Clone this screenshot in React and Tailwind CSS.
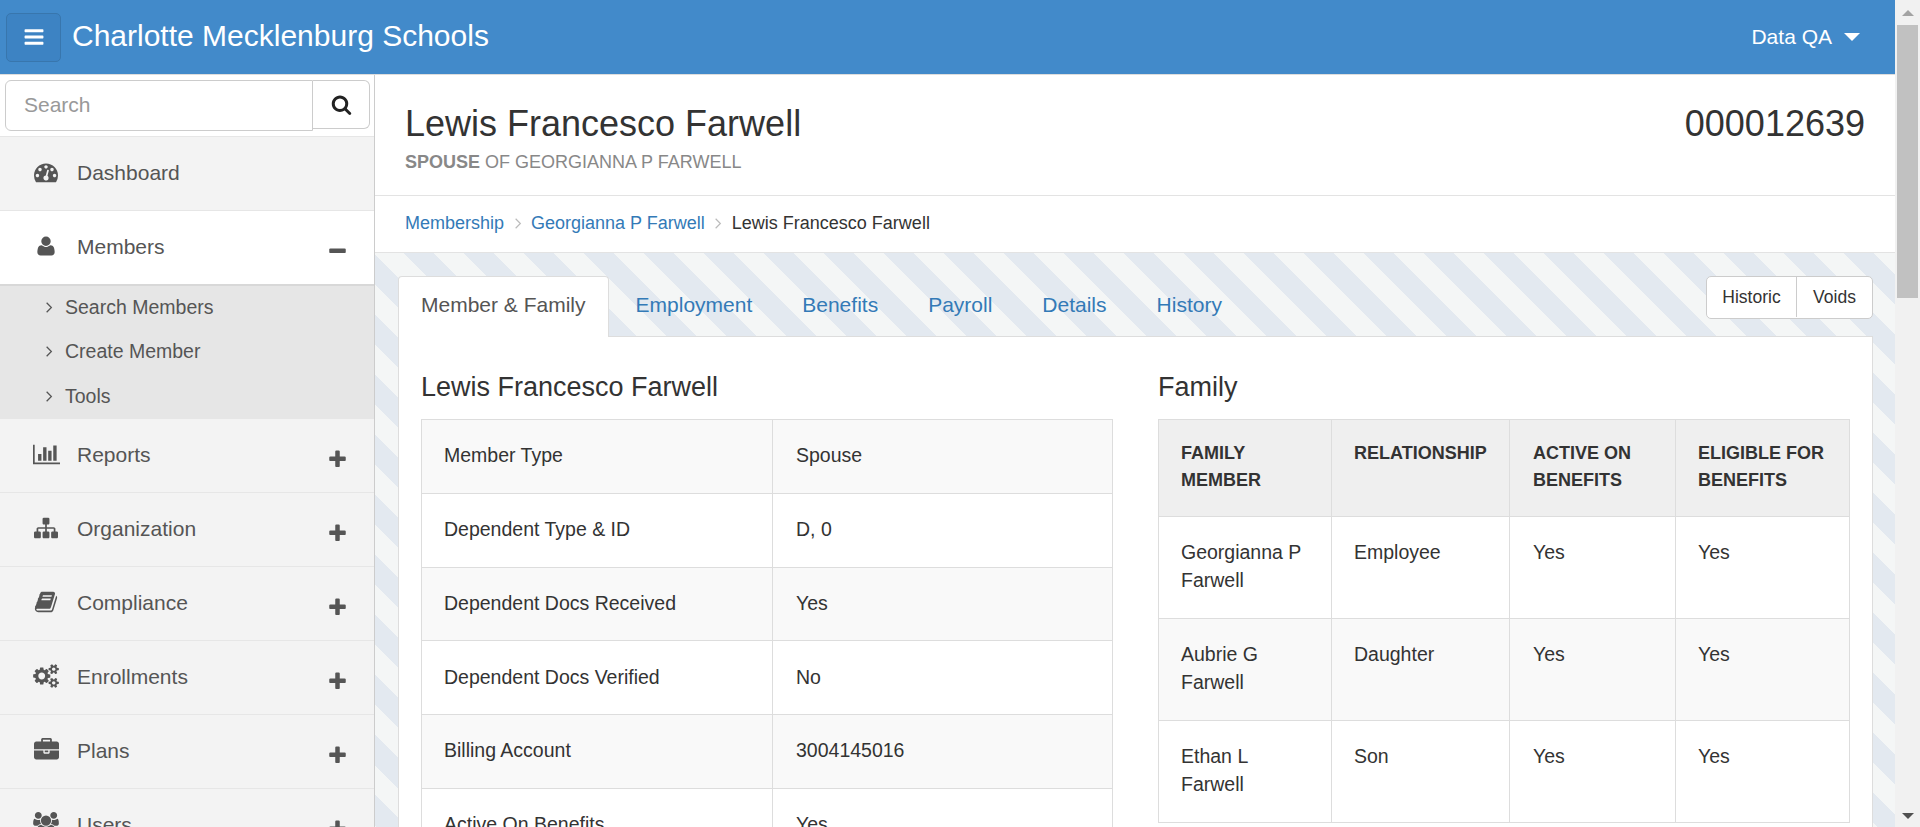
import React from "react";

const paths = {
  bars: "M1664 1344v128q0 26-19 45t-45 19h-1408q-26 0-45-19t-19-45v-128q0-26 19-45t45-19h1408q26 0 45 19t19 45zm0-512v128q0 26-19 45t-45 19h-1408q-26 0-45-19t-19-45v-128q0-26 19-45t45-19h1408q26 0 45 19t19 45zm0-512v128q0 26-19 45t-45 19h-1408q-26 0-45-19t-19-45v-128q0-26 19-45t45-19h1408q26 0 45 19t19 45z",
  search: "M1216 832q0-185-131.5-316.5t-316.5-131.5-316.5 131.5-131.5 316.5 131.5 316.5 316.5 131.5 316.5-131.5 131.5-316.5zm512 832q0 52-38 90t-90 38q-54 0-90-38l-343-342q-179 124-399 124-143 0-273.5-55.5t-225-150-150-225-55.5-273.5 55.5-273.5 150-225 225-150 273.5-55.5 273.5 55.5 225 150 150 225 55.5 273.5q0 220-124 399l343 343q37 37 37 90z",
  dashboard: "M384 1152q0-53-37.5-90.5t-90.5-37.5-90.5 37.5-37.5 90.5 37.5 90.5 90.5 37.5 90.5-37.5 37.5-90.5zm192-448q0-53-37.5-90.5t-90.5-37.5-90.5 37.5-37.5 90.5 37.5 90.5 90.5 37.5 90.5-37.5 37.5-90.5zm428 481l101-382q6-26-7.5-48.5t-38.5-29.5-48 6.5-30 39.5l-101 382q-60 5-107 43.5t-63 98.5q-20 77 20 146t117 89 146-20 89-117q16-60-6-117t-72-91zm660-33q0-53-37.5-90.5t-90.5-37.5-90.5 37.5-37.5 90.5 37.5 90.5 90.5 37.5 90.5-37.5 37.5-90.5zm-640-640q0-53-37.5-90.5t-90.5-37.5-90.5 37.5-37.5 90.5 37.5 90.5 90.5 37.5 90.5-37.5 37.5-90.5zm448 192q0-53-37.5-90.5t-90.5-37.5-90.5 37.5-37.5 90.5 37.5 90.5 90.5 37.5 90.5-37.5 37.5-90.5zm320 448q0 261-141 483-19 29-54 29h-1402q-35 0-54-29-141-221-141-483 0-182 71-348t191-286 286-191 348-71 348 71 286 191 191 286 71 348z",
  user: "M1600 1405q0 120-73 189.5t-194 69.5h-874q-121 0-194-69.5t-73-189.5q0-53 3.5-103.5t14-109 26.5-108.5 43-97.5 62-81 85.5-53.5 111.5-20q9 0 42 21.5t74.5 48 108 48 133.5 21.5 133.5-21.5 108-48 74.5-48 42-21.5q61 0 111.5 20t85.5 53.5 62 81 43 97.5 26.5 108.5 14 109 3.5 103.5zm-320-893q0 159-112.5 271.5t-271.5 112.5-271.5-112.5-112.5-271.5 112.5-271.5 271.5-112.5 271.5 112.5 112.5 271.5z",
  sitemap: "M1792 1248v320q0 40-28 68t-68 28h-320q-40 0-68-28t-28-68v-320q0-40 28-68t68-28h96v-192h-512v192h96q40 0 68 28t28 68v320q0 40-28 68t-68 28h-320q-40 0-68-28t-28-68v-320q0-40 28-68t68-28h96v-192h-512v192h96q40 0 68 28t28 68v320q0 40-28 68t-68 28h-320q-40 0-68-28t-28-68v-320q0-40 28-68t68-28h96v-192q0-52 38-90t90-38h512v-192h-96q-40 0-68-28t-28-68v-320q0-40 28-68t68-28h320q40 0 68 28t28 68v320q0 40-28 68t-68 28h-96v192h512q52 0 90 38t38 90v192h96q40 0 68 28t28 68z",
  book: "M1703 478q40 57 18 129l-275 906q-19 64-76.5 107.5t-122.5 43.5h-923q-77 0-148.5-53.5t-99.5-131.5q-24-67-2-127 0-4 3-27t4-37q1-8-3-21.5t-3-19.5q2-11 8-21t16.5-23.5 16.5-23.5q23-38 45-91.5t30-91.5q3-10 .5-30t-.5-28q3-11 17-28t17-23q21-36 42-92t25-90q1-9-2.5-32t.5-28q4-13 22-30.5t22-22.5q19-26 42.5-84.5t27.5-96.5q1-8-3-25.5t-2-26.5q2-8 9-18t18-23 17-21q8-12 16.5-30.5t15-35 16-36 19.5-32 26.5-23.5 36-11.5 47.5 5.5l-1 3q38-9 51-9h761q74 0 114 56t18 130l-274 906q-36 119-71.5 153.5t-128.5 34.5h-869q-27 0-38 15-11 16-1 43 24 70 144 70h923q29 0 56-15.5t35-41.5l300-987q7-22 5-57 38 15 59 43zm-1064 2q-4 13 2 22.5t20 9.5h608q13 0 25.5-9.5t16.5-22.5l21-64q4-13-2-22.5t-20-9.5h-608q-13 0-25.5 9.5t-16.5 22.5zm-83 256q-4 13 2 22.5t20 9.5h608q13 0 25.5-9.5t16.5-22.5l21-64q4-13-2-22.5t-20-9.5h-608q-13 0-25.5 9.5t-16.5 22.5z",
  briefcase: "M640 256h512v-128h-512v128zm1152 640v480q0 66-47 113t-113 47h-1472q-66 0-113-47t-47-113v-480h672v160q0 26 19 45t45 19h320q26 0 45-19t19-45v-160h672zm-768 0v128h-256v-128h256zm768-480v384h-1792v-384q0-66 47-113t113-47h352v-160q0-40 28-68t68-28h576q40 0 68 28t28 68v160h352q66 0 113 47t47 113z",
  plus: "M1600 736v192q0 40-28 68t-68 28h-416v416q0 40-28 68t-68 28h-192q-40 0-68-28t-28-68v-416h-416q-40 0-68-28t-28-68v-192q0-40 28-68t68-28h416v-416q0-40 28-68t68-28h192q40 0 68 28t28 68v416h416q40 0 68 28t28 68z",
  minus: "M1600 736v192q0 40-28 68t-68 28h-1216q-40 0-68-28t-28-68v-192q0-40 28-68t68-28h1216q40 0 68 28t28 68z",
};

const wide = {
  chart: { box: "0 0 2048 1792", d: "M640 896v512h-256v-512h256zm384-512v1024h-256v-1024h256zm1024 1152v128h-2048v-1472h128v1344h1920zm-640-896v768h-256v-768h256zm384-384v1152h-256v-1152h256z" },
  cogs: { box: "0 0 1920 1792", d: "M896 896q0-106-75-181t-181-75-181 75-75 181 75 181 181 75 181-75 75-181zm768 512q0-52-38-90t-90-38-90 38-38 90q0 53 37.5 90.5t90.5 37.5 90.5-37.5 37.5-90.5zm0-1024q0-52-38-90t-90-38-90 38-38 90q0 53 37.5 90.5t90.5 37.5 90.5-37.5 37.5-90.5zm-384 421v185q0 10-7 19.5t-16 10.5l-155 24q-11 35-32 76 34 48 90 115 7 11 7 20 0 12-7 19-23 30-82.5 89.5t-78.5 59.5q-11 0-21-7l-115-90q-37 19-77 31-11 108-23 155-7 24-30 24h-186q-11 0-20-7.5t-10-17.5l-23-153q-34-10-75-31l-118 89q-7 7-20 7-11 0-21-8-144-133-144-160 0-9 7-19 10-14 41-53t47-61q-23-44-35-82l-152-24q-10-1-17-9.5t-7-19.5v-185q0-10 7-19.5t16-10.5l155-24q11-35 32-76-34-48-90-115-7-11-7-20 0-12 7-20 22-30 82-89t79-59q11 0 21 7l115 90q34-18 77-32 11-108 23-154 7-24 30-24h186q11 0 20 7.5t10 17.5l23 153q34 10 75 31l118-89q8-7 20-7 11 0 21 8 144 133 144 160 0 8-7 19-12 16-42 54t-45 60q23 48 34 82l152 23q10 2 17 10.5t7 19.5zm640 533v140q0 16-149 31-12 27-30 52 51 113 51 138 0 4-4 7-122 71-124 71-8 0-46-47t-52-68q-20 2-30 2t-30-2q-14 21-52 68t-46 47q-2 0-124-71-4-3-4-7 0-25 51-138-18-25-30-52-149-15-149-31v-140q0-16 149-31 13-29 30-52-51-113-51-138 0-4 4-7 4-2 35-20t59-34 30-16q8 0 46 46.5t52 67.5q20-2 30-2t30 2q51-71 92-112l6-2q4 0 124 70 4 3 4 7 0 25-51 138 17 23 30 52 149 15 149 31zm0-1024v140q0 16-149 31-12 27-30 52 51 113 51 138 0 4-4 7-122 71-124 71-8 0-46-47t-52-68q-20 2-30 2t-30-2q-14 21-52 68t-46 47q-2 0-124-71-4-3-4-7 0-25 51-138-18-25-30-52-149-15-149-31v-140q0-16 149-31 13-29 30-52-51-113-51-138 0-4 4-7 4-2 35-20t59-34 30-16q8 0 46 46.5t52 67.5q20-2 30-2t30 2q51-71 92-112l6-2q4 0 124 70 4 3 4 7 0 25-51 138 17 23 30 52 149 15 149 31z" },
  users: { box: "0 0 1920 1792", d: "M593 896q-162 5-265 128h-134q-82 0-138-40.5t-56-118.5q0-353 124-353 6 0 43.5 21t97.5 42.5 119 21.5q67 0 133-23-5 37-5 66 0 139 81 256zm1071 637q0 120-73 189.5t-194 69.5h-874q-121 0-194-69.5t-73-189.5q0-53 3.5-103.5t14-109 26.5-108.5 43-97.5 62-81 85.5-53.5 111.5-20q10 0 43 21.5t73 48 107 48 135 21.5 135-21.5 107-48 73-48 43-21.5q61 0 111.5 20t85.5 53.5 62 81 43 97.5 26.5 108.5 14 109 3.5 103.5zm-1024-1277q0 106-75 181t-181 75-181-75-75-181 75-181 181-75 181 75 75 181zm704 384q0 159-112.5 271.5t-271.5 112.5-271.5-112.5-112.5-271.5 112.5-271.5 271.5-112.5 271.5 112.5 112.5 271.5zm576 225q0 78-56 118.5t-138 40.5h-134q-103-123-265-128 81-117 81-256 0-29-5-66 66 23 133 23 59 0 119-21.5t97.5-42.5 43.5-21q124 0 124 353zm-128-609q0 106-75 181t-181 75-181-75-75-181 75-181 181-75 181 75 75 181z" },
};

function Icon({ name, className }) {
  const w = wide[name];
  return (
    <svg viewBox={w ? w.box : "0 0 1792 1792"} className={className} fill="currentColor">
      <path d={w ? w.d : paths[name]} />
    </svg>
  );
}

const lowerRows = [
  { label: "Reports", icon: "chart", cls: "w-[27px] h-[24px] -mt-1" },
  { label: "Organization", icon: "sitemap", cls: "w-[24px] h-[24px] -mt-[3px]" },
  { label: "Compliance", icon: "book", cls: "w-[24px] h-[24px] -mt-[3px]" },
  { label: "Enrollments", icon: "cogs", cls: "w-[26px] h-[24px] -mt-[3px]" },
  { label: "Plans", icon: "briefcase", cls: "w-[25px] h-[25px] -mt-[3px]" },
  { label: "Users", icon: "users", cls: "w-[26px] h-[24px] -mt-[3px]" },
];

const memberRows = [
  ["Member Type", "Spouse"],
  ["Dependent Type & ID", "D, 0"],
  ["Dependent Docs Received", "Yes"],
  ["Dependent Docs Verified", "No"],
  ["Billing Account", "3004145016"],
  ["Active On Benefits", "Yes"],
];

const familyRows = [
  ["Georgianna P Farwell", "Employee", "Yes", "Yes"],
  ["Aubrie G Farwell", "Daughter", "Yes", "Yes"],
  ["Ethan L Farwell", "Son", "Yes", "Yes"],
];

function NavRow({ label, icon, cls, noToggle }) {
  return (
    <div className="flex h-[74px] shrink-0 items-center border-b border-[#e6e6e6] bg-[#f3f3f3] text-[#555]">
      <div className="flex w-[77px] shrink-0 justify-center pl-[21px] pr-[6px]">
        <Icon name={icon} className={cls} />
      </div>
      <span className="-mt-[2px] text-[21px]">{label}</span>
      {!noToggle && <Icon name="plus" className="ml-auto mr-[26px] mt-2 h-[21px] w-[21px]" />}
    </div>
  );
}

function SubItem({ label }) {
  return (
    <div className="flex h-[44.6px] items-center text-[19.5px] text-[#555]">
      <svg viewBox="0 0 10 14" className="ml-[45px] mr-[12px] h-[11px] w-[8px]" fill="none" stroke="#555" strokeWidth="1.6">
        <path d="M2 1l6 6-6 6" />
      </svg>
      {label}
    </div>
  );
}

function Sidebar() {
  return (
    <aside className="flex w-[375px] shrink-0 flex-col border-r border-[#ccc] bg-[#f3f3f3]">
      <div className="h-[62px] shrink-0 border-b border-[#e6e6e6] bg-white pl-[5px] pr-[4px] pt-[5px]">
        <div className="flex items-start">
          <div className="flex h-[51px] w-[308px] items-center rounded-l-[6px] border border-[#ccc] pb-[2px] pl-[18px] text-[21px] text-[#999]">Search</div>
          <div className="flex h-[49px] w-[57px] items-center justify-center rounded-r-[6px] border border-l-0 border-[#ccc] text-[#222]">
            <Icon name="search" className="h-[21px] w-[21px]" />
          </div>
        </div>
      </div>
      <NavRow label="Dashboard" icon="dashboard" cls="w-[24px] h-[24px] -mt-[3px]" noToggle />
      <div className="flex h-[75px] shrink-0 items-center border-b-2 border-[#d8d8d8] bg-white text-[#555]">
        <div className="flex w-[77px] shrink-0 justify-center pl-[21px] pr-[6px]">
          <Icon name="user" className="-mt-[3px] h-[22px] w-[22px]" />
        </div>
        <span className="-mt-[2px] text-[21px]">Members</span>
        <Icon name="minus" className="ml-auto mr-[26px] mt-2 h-[21px] w-[21px]" />
      </div>
      <div className="h-[133px] shrink-0 overflow-hidden bg-[#e6e6e6]">
        <div className="-mt-[1px]">
          <SubItem label="Search Members" />
          <SubItem label="Create Member" />
          <SubItem label="Tools" />
        </div>
      </div>
      {lowerRows.map((r) => (
        <NavRow key={r.label} {...r} />
      ))}
    </aside>
  );
}

function Tab({ label }) {
  return <div className="px-[25px] pt-[15px] text-[21px] leading-[28px] text-[#337ab7]">{label}</div>;
}

function Panel() {
  return (
    <div className="ml-[23px] mr-[22px] mt-[23px]">
      <div className="flex h-[60px] items-start justify-between">
        <div className="flex h-[60px] items-start">
          <div className="relative z-10 mr-[2px] h-[61px] rounded-t-[4px] border border-b-0 border-[#ddd] bg-white px-[22px] pt-[14px] text-[21px] leading-[28px] text-[#555]">Member &amp; Family</div>
          <Tab label="Employment" />
          <Tab label="Benefits" />
          <Tab label="Payroll" />
          <Tab label="Details" />
          <Tab label="History" />
        </div>
        <div className="flex h-[43px] items-center rounded-[5px] border border-[#ccc] bg-white pb-[1px] text-[17.5px] text-[#333]">
          <div className="flex h-full w-[90px] items-center justify-center border-r border-[#ccc]">Historic</div>
          <div className="flex h-full w-[75px] items-center justify-center">Voids</div>
        </div>
      </div>
      <div className="grid grid-cols-[692px_692px] gap-x-[45px] border border-[#ddd] bg-white pl-[22px] pr-[24px] pt-[33px]">
        <div>
          <h3 className="mb-[15px] text-[27px] leading-[34px] text-[#333]">Lewis Francesco Farwell</h3>
          <table className="w-full border-collapse text-[19.5px] text-[#333]">
            <tbody>
              {memberRows.map(([k, v], i) => (
                <tr key={k} className={i % 2 === 0 ? "bg-[#f9f9f9]" : "bg-white"}>
                  <td className="h-[73.8px] w-[351px] border border-[#ddd] pb-[1px] pl-[22px]">{k}</td>
                  <td className="border border-[#ddd] pb-[1px] pl-[23px]">{v}</td>
                </tr>
              ))}
            </tbody>
          </table>
        </div>
        <div>
          <h3 className="mb-[15px] text-[27px] leading-[34px] text-[#333]">Family</h3>
          <table className="w-full table-fixed border-collapse text-[19.5px] text-[#333]">
            <thead>
              <tr className="h-[97px] bg-[#efefef] text-left align-top text-[18px] font-bold leading-[27px]">
                <th className="w-[173px] border border-[#ddd] pl-[22px] pr-[22px] pt-[20px]">FAMILY MEMBER</th>
                <th className="w-[178px] border border-[#ddd] pl-[22px] pr-[10px] pt-[20px]">RELATIONSHIP</th>
                <th className="w-[166px] border border-[#ddd] pl-[23px] pr-[10px] pt-[20px]">ACTIVE ON BENEFITS</th>
                <th className="border border-[#ddd] pl-[22px] pr-[10px] pt-[20px]">ELIGIBLE FOR BENEFITS</th>
              </tr>
            </thead>
            <tbody>
              {familyRows.map((r, i) => (
                <tr key={r[0]} className={i % 2 === 1 ? "bg-[#f9f9f9]" : "bg-white"}>
                  {r.map((c, j) => (
                    <td key={j} className={`h-[102px] border border-[#ddd] pr-[22px] pt-[22px] align-top leading-[27.7px] ${j === 2 ? "pl-[23px]" : "pl-[22px]"}`}>{c}</td>
                  ))}
                </tr>
              ))}
            </tbody>
          </table>
        </div>
      </div>
    </div>
  );
}

function Scrollbar() {
  return (
    <div className="flex w-[25px] shrink-0 flex-col items-center justify-between bg-[#f1f1f1] pb-[8px] pt-[10px]">
      <div className="flex flex-col items-center">
        <div className="h-0 w-0 border-x-[6px] border-b-[6px] border-x-transparent border-b-[#a3a3a3]" />
        <div className="mt-[9px] h-[273px] w-[21px] bg-[#c1c1c1]" />
      </div>
      <div className="h-0 w-0 border-x-[6px] border-t-[6px] border-x-transparent border-t-[#505050]" />
    </div>
  );
}

function Crumb() {
  return (
    <svg viewBox="0 0 10 14" className="mx-[9.5px] h-[11px] w-[8px]" fill="none" stroke="#bbb" strokeWidth="1.5">
      <path d="M2 1l6 6-6 6" />
    </svg>
  );
}

export default function App() {
  return (
    <div className="flex h-[827px] overflow-hidden bg-white font-['Liberation_Sans',Arial,sans-serif]">
      <div className="flex min-w-0 flex-1 flex-col">
        <header className="flex h-[75px] shrink-0 items-center border-b border-[#ddd] bg-[#428aca] pl-[6px] pr-[35px] text-white">
          <button className="flex h-[49px] w-[55px] items-center justify-center rounded-[5px] border border-[#3876ad] bg-[#3d83c3]">
            <Icon name="bars" className="h-[22px] w-[22px]" />
          </button>
          <div className="ml-[11px] pb-[3px] text-[30px]">Charlotte Mecklenburg Schools</div>
          <div className="ml-auto flex items-center text-[21px]">
            Data QA
            <span className="ml-[12px] h-0 w-0 border-x-[8px] border-t-[8px] border-x-transparent border-t-white" />
          </div>
        </header>
        <div className="flex min-h-0 flex-1">
          <Sidebar />
          <main className="flex min-w-0 flex-1 flex-col">
            <div className="flex h-[121px] shrink-0 justify-between border-b border-[#e3e3e3] pl-[30px] pr-[30px] pt-[29px]">
              <div>
                <h1 className="text-[36px] leading-[40px] text-[#333]">Lewis Francesco Farwell</h1>
                <p className="mt-[5px] text-[18px] uppercase text-[#888]"><b>Spouse</b> of Georgianna P Farwell</p>
              </div>
              <div className="text-[36px] leading-[40px] text-[#333]">000012639</div>
            </div>
            <div className="flex h-[57px] shrink-0 items-center border-b border-[#e3e3e3] pb-[2px] pl-[30px] text-[18px]">
              <span className="text-[#337ab7]">Membership</span>
              <Crumb />
              <span className="text-[#337ab7]">Georgianna P Farwell</span>
              <Crumb />
              <span className="text-[#333]">Lewis Francesco Farwell</span>
            </div>
            <div className="min-h-0 flex-1 overflow-hidden bg-[repeating-linear-gradient(45deg,#f4f6f6_-19.8px,#f4f6f6_1.41px,#e3e9f0_1.41px,#e3e9f0_22.63px)]">
              <Panel />
            </div>
          </main>
        </div>
      </div>
      <Scrollbar />
    </div>
  );
}
